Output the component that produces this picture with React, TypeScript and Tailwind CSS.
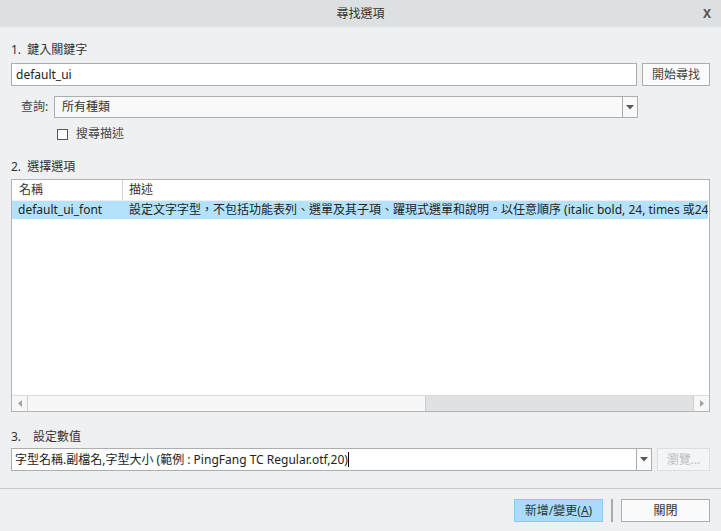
import React from 'react';

const font = "font-['Noto_Sans','Noto_Sans_CJK_TC',sans-serif]";

function DownArrow() {
  return (
    <svg width="8" height="5" viewBox="0 0 8 5">
      <path d="M0 0 H8 L4 4.5 Z" fill="#5a5a5a" />
    </svg>
  );
}

export default function App() {
  return (
    <div className={`${font} w-[721px] h-[531px] bg-[#eef0f2] text-[12px] leading-[16px] text-[#333] flex flex-col overflow-hidden`}>
      {/* title bar */}
      <div className="relative h-[27px] shrink-0 bg-[#dde0e2] flex items-center justify-center">
        <span className="text-[#333]">尋找選項</span>
        <span className="absolute right-[10px] top-[6px] text-[12px] font-bold text-[#555]">X</span>
      </div>

      <div className="flex flex-col pl-[11px] pr-[11px]">
        <div className="mt-[15px] h-[16px]">1.&nbsp; 鍵入關鍵字</div>

        <div className="mt-[5px] flex gap-[5px]">
          <div className="flex-1 h-[23px] bg-white border border-[#adadad] flex items-center px-[4px] text-[#222]">default_ui</div>
          <button type="button" className="w-[68px] h-[23px] bg-[#fbfbfb] border border-[#adadad] text-[#444]">開始尋找</button>
        </div>

        <div className="mt-[10px] flex items-center">
          <span className="w-[43px] pl-[10px] text-[#444]">查詢:</span>
          <div className="w-[584px] h-[22px] bg-[#f9f9f9] border border-[#adadad] flex items-stretch">
            <span className="flex-1 flex items-center pl-[7px] text-[#333]">所有種類</span>
            <span className="w-[15px] border-l border-[#adadad] flex items-center justify-center"><DownArrow /></span>
          </div>
        </div>

        <div className="mt-[8px] h-[16px] flex items-center pl-[46px]">
          <span className="w-[11px] h-[11px] bg-white border border-[#555]" />
          <span className="ml-[8px] text-[#444]">搜尋描述</span>
        </div>

        <div className="mt-[17px] h-[16px]">2.&nbsp; 選擇選項</div>

        {/* options table */}
        <div className="mt-[4px] h-[233px] border border-[#b4b4b4] bg-white flex flex-col overflow-hidden">
          <div className="h-[21px] shrink-0 flex items-stretch border-b border-[#f0f0f0]">
            <div className="w-[111px] pl-[7px] flex items-center border-r border-[#d4d4d4]">名稱</div>
            <div className="flex-1 pl-[6px] flex items-center">描述</div>
          </div>
          <div className="h-[18px] shrink-0 mr-[1px] bg-[#b4e2fb] flex items-center whitespace-nowrap overflow-hidden text-[#222]">
            <span className="w-[111px] pl-[6px] shrink-0">default_ui_font</span>
            <span className="pl-[6px]">設定文字字型，不包括功能表列、選單及其子項、躍現式選單和說明。以任意順序 (italic bold, 24, times 或24</span>
          </div>
          <div className="flex-1" />
          <div className="h-[16px] shrink-0 flex items-stretch border-t border-[#dcdcdc] bg-[#dfe1e3]">
            <div className="w-[16px] bg-[#f7f7f7] border-r border-[#d0d0d0] flex items-center justify-center">
              <svg width="4" height="7" viewBox="0 0 4 7"><path d="M4 0 V7 L0 3.5 Z" fill="#a0a0a0" /></svg>
            </div>
            <div className="w-[398px] bg-[#f7f7f7] border-r border-[#cfcfcf]" />
            <div className="flex-1" />
            <div className="w-[16px] bg-[#f7f7f7] border-l border-[#d0d0d0] flex items-center justify-center">
              <svg width="4" height="7" viewBox="0 0 4 7"><path d="M0 0 V7 L4 3.5 Z" fill="#a0a0a0" /></svg>
            </div>
          </div>
        </div>

        <div className="mt-[17px] h-[16px] flex">
          <span className="w-[22px]">3.</span>
          <span>設定數值</span>
        </div>

        <div className="mt-[3px] flex gap-[5px]">
          <div className="w-[641px] h-[23px] bg-white border border-[#adadad] flex items-stretch">
            <span className="flex-1 flex items-center pl-[3px] text-[#222]">
              字型名稱.副檔名,字型大小 (範例 : PingFang TC Regular.otf,20)
              <span className="inline-block w-px h-[15px] bg-black" />
            </span>
            <span className="w-[15px] border-l border-[#adadad] bg-[#fbfbfb] flex items-center justify-center"><DownArrow /></span>
          </div>
          <button type="button" className="w-[53px] h-[23px] bg-[#f4f5f6] border border-[#dcdedf] text-[#bdbdbd]">瀏覽...</button>
        </div>
      </div>

      <div className="mt-[17px] h-px bg-[#c9c9c9]" />

      <div className="mt-[10px] flex items-stretch justify-end pr-[11px]">
        <button type="button" className="w-[89px] h-[23px] bg-[#a8dcfb] border border-[#83cdf5] text-[#333]">
          新增/變更(<span className="underline">A</span>)
        </button>
        <span className="mx-[8px] w-[2px] bg-[#aaaaaa]" />
        <button type="button" className="w-[89px] h-[23px] bg-[#fbfbfb] border border-[#adadad] text-[#333]">關閉</button>
      </div>
    </div>
  );
}
